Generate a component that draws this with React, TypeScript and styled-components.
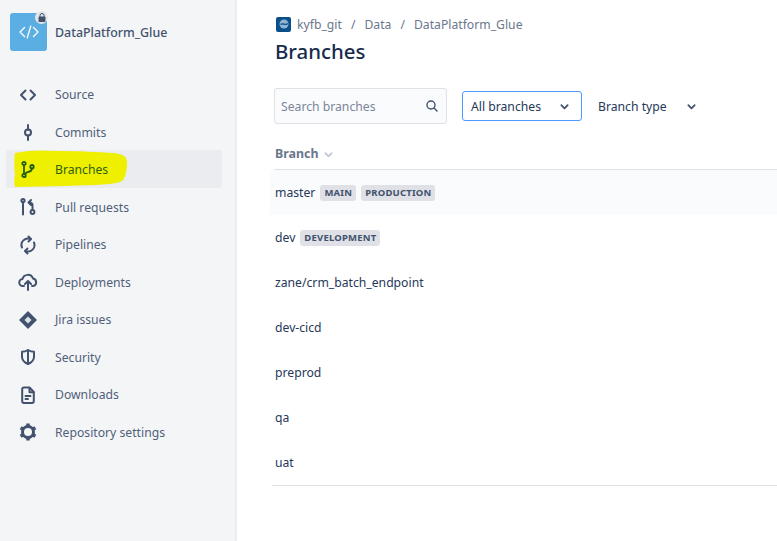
import React from "react";
import styled, { createGlobalStyle } from "styled-components";

const Global = createGlobalStyle`
  html, body { margin: 0; padding: 0; background: #fff; }
  body { font-family: "Noto Sans", "Open Sans", sans-serif; overflow: hidden; }
  #root { width: 777px; height: 541px; overflow: hidden; }
`;

const Page = styled.div`
  display: flex;
  width: 777px;
  height: 541px;
  overflow: hidden;
`;
const Sidebar = styled.aside`
  flex: 0 0 236px;
  height: 541px;
  box-sizing: border-box;
  background: #f4f5f7;
  border-right: 1px solid #e6e8ec;
  box-shadow: 1px 0 1px #f1f2f4;
  padding: 13px 13px 0 6px;
`;
const RepoHead = styled.div`
  display: flex;
  align-items: center;
  gap: 8px;
  padding-left: 4px;
  height: 38px;
  margin-bottom: 24px;
`;
const RepoAvatar = styled.div`
  position: relative;
  width: 37px;
  height: 38px;
  border-radius: 3px;
  background: #5aaee2;
  display: flex;
  align-items: center;
  justify-content: center;
`;
const LockBadge = styled.div`
  position: absolute;
  top: -2px;
  right: -1px;
  width: 13px;
  height: 13px;
  border-radius: 50%;
  background: #e4e6ea;
  display: flex;
  align-items: center;
  justify-content: center;
`;
const RepoName = styled.div`
  font-size: 12.4px;
  font-weight: 500;
  color: #42526e;
  white-space: nowrap;
`;
const Nav = styled.nav`
  display: flex;
  flex-direction: column;
`;
const NavRow = styled.div<{ $active?: boolean }>`
  position: relative;
  box-sizing: border-box;
  height: 37.5px;
  display: flex;
  align-items: center;
  padding: 2px 0 0 12px;
  gap: 17px;
  border-radius: 3px;
  background: ${(p) => (p.$active ? "#ebecf0" : "transparent")};
  color: ${(p) => (p.$active ? "#2f5f10" : "#505f79")};
  font-size: 12.2px;
`;
const NavIcon = styled.span`
  position: relative;
  z-index: 1;
  flex: 0 0 20px;
  height: 20px;
  display: flex;
  align-items: center;
  justify-content: center;
`;
const NavLabel = styled.span`
  position: relative;
  z-index: 1;
  white-space: nowrap;
`;
const Scribble = styled.svg`
  position: absolute;
  left: 8px;
  top: 0;
  width: 114px;
  height: 38px;
`;
const Main = styled.main`
  flex: 1;
  min-width: 0;
  padding: 15px 0 0 36px;
`;
const Crumbs = styled.div`
  display: flex;
  align-items: center;
  height: 18px;
  padding-left: 4px;
  font-size: 12.2px;
  color: #6b778c;
  white-space: nowrap;
`;
const CrumbLogo = styled.span`
  width: 15px;
  height: 15px;
  border-radius: 2px;
  background: #0b4f8a;
  margin-right: 6px;
  display: flex;
  align-items: center;
  justify-content: center;
`;
const CrumbSep = styled.span`
  margin: 0 9px;
`;
const Title = styled.h1`
  margin: 3px 0 0 3px;
  font-size: 20.4px;
  line-height: 30px;
  font-weight: 500;
  color: #172b4d;
`;
const Filters = styled.div`
  display: flex;
  align-items: center;
  margin: 22px 0 0 2px;
`;
const Search = styled.div`
  box-sizing: border-box;
  width: 173px;
  height: 36px;
  border: 1px solid #dfe1e6;
  border-radius: 3px;
  background: #fafbfc;
  display: flex;
  align-items: center;
  justify-content: space-between;
  padding: 0 7px 0 6px;
  font-size: 12.2px;
  color: #7a869a;
`;
const Select = styled.div<{ $focused?: boolean }>`
  box-sizing: border-box;
  height: 30px;
  display: flex;
  align-items: center;
  justify-content: space-between;
  font-size: 12.2px;
  color: #253858;
  white-space: nowrap;
  border-radius: 3px;
  width: ${(p) => (p.$focused ? "120px" : "100px")};
  margin-left: ${(p) => (p.$focused ? "15px" : "16px")};
  padding: ${(p) => (p.$focused ? "0 12px 0 8px" : "0 2px 0 0")};
  border: ${(p) => (p.$focused ? "1px solid #4c9aff" : "none")};
`;
const TableHead = styled.div`
  display: flex;
  align-items: flex-start;
  gap: 6px;
  height: 46px;
  margin-left: 2px;
  padding: 21px 0 0 1px;
  box-sizing: border-box;
  font-size: 12.4px;
  line-height: 17px;
  font-weight: 700;
  color: #6b778c;
  border-bottom: 1px solid #dfe1e6;
`;
const HeadChevron = styled.span`
  display: flex;
  margin-top: 5px;
`;
const Rows = styled.div`
  border-bottom: 1px solid #dfe1e6;
`;
const Row = styled.div<{ $hover?: boolean }>`
  height: 45px;
  display: flex;
  align-items: center;
  gap: 5px;
  margin-left: -2px;
  padding-left: 5px;
  font-size: 12.2px;
  color: #253858;
  white-space: nowrap;
  background: ${(p) => (p.$hover ? "#fafbfc" : "transparent")};
`;
const Lozenge = styled.span`
  font-size: 9.5px;
  font-weight: 700;
  line-height: 16px;
  height: 16px;
  margin-top: 1px;
  padding: 0 4px;
  border-radius: 3px;
  background: #dfe1e6;
  color: #42526e;
  letter-spacing: 0.2px;
`;

const C = "#42526e";
const S = { fill: "none", stroke: C, strokeWidth: 2, strokeLinecap: "round" as const, strokeLinejoin: "round" as const };

const icons: Record<string, React.ReactNode> = {
  source: <svg width="18" height="18" viewBox="0 0 18 18" {...S}><path d="M6.5 4.5 2 9l4.5 4.5M11.500 4.500 16 9l-4.500 4.500" /></svg>,
  commits: <svg width="18" height="20" viewBox="0 0 18 20" {...S}><circle cx="9" cy="10.500" r="3" /><path d="M9 3v4.500M9 13.500V18" /></svg>,
  branches: <svg width="18" height="20" viewBox="0 0 18 20" fill="none" stroke="#1f5c14" strokeWidth="1.800"><circle cx="5" cy="3.500" r="1.700" /><circle cx="5" cy="15.500" r="1.700" /><circle cx="13" cy="6.700" r="1.700" /><path d="M5 5.500v8M13 8.500c0 4.500-6 2.500-6.500 5.500" /></svg>,
  pull: <svg width="20" height="20" viewBox="0 0 20 20" {...S}><circle cx="5" cy="3.500" r="1.600" /><path d="M5 5.500V17.500" /><circle cx="14.500" cy="15" r="1.900" /><path d="M14.500 13V8c0-2-1-2.500-3.500-2.500M13 3l-2.500 2.500L13 8" /></svg>,
  pipelines: <svg width="20" height="20" viewBox="0 0 20 20" {...S}><path d="M4 12.500A6.500 6.500 0 0 1 12.500 4M16 7.500A6.500 6.500 0 0 1 7.500 16" /><path d="M10.500 1.500 13 4l-2.500 2.500M9.500 13.500 7 16l2.500 2.500" /></svg>,
  deployments: <svg width="20" height="20" viewBox="0 0 20 20" {...S}><path d="M6 14H5a3.500 3.500 0 0 1-.5-7A5.500 5.500 0 0 1 15 6.500a3.800 3.800 0 0 1 0 7.500h-1" /><path d="M10 18V9.500M7 12l3-3 3 3" /></svg>,
  jira: <svg width="20" height="20" viewBox="0 0 20 20"><path fill={C} d="M10 1 19 10l-9 9-9-9z" /><path fill="#dfe3ea" d="M10 6.500 13.500 10 10 13.500 6.500 10z" /></svg>,
  security: <svg width="20" height="20" viewBox="0 0 20 20" {...S}><path d="M10 3c2 1.200 4 1.700 6 1.700v5c0 3.500-2.500 5.800-6 7.300-3.500-1.500-6-3.800-6-7.300v-5C6 4.700 8 4.200 10 3z" /><path d="M10 3.500v13.500" /></svg>,
  downloads: <svg width="20" height="20" viewBox="0 0 20 20" {...S}><path d="M11.500 2.500H6A1.800 1.800 0 0 0 4.200 4.300v12A1.800 1.800 0 0 0 6 18h8a1.800 1.800 0 0 0 1.800-1.700V7z" /><path d="M11.500 3v4.200h4M7.500 11h5M7.500 14h2.500" /></svg>,
  settings: <svg width="20" height="20" viewBox="0 0 20 20"><circle cx="10" cy="10" r="5.500" fill="none" stroke={C} strokeWidth="3" /><g stroke={C} strokeWidth="3.500"><path d="M10 1.500v3M10 15.500v3M2.600 5.700l2.600 1.500M14.800 12.800l2.600 1.500M2.600 14.300l2.600-1.500M14.800 7.200l2.600-1.500" /></g></svg>,
};

const navItems = [
  ["source", "Source"],
  ["commits", "Commits"],
  ["branches", "Branches"],
  ["pull", "Pull requests"],
  ["pipelines", "Pipelines"],
  ["deployments", "Deployments"],
  ["jira", "Jira issues"],
  ["security", "Security"],
  ["downloads", "Downloads"],
  ["settings", "Repository settings"],
];

const Chevron = ({ color = "#42526e", size = 9 }: { color?: string; size?: number }) => (
  <svg width={size} height={size} viewBox="0 0 10 10" fill="none" stroke={color} strokeWidth="2" strokeLinecap="round" strokeLinejoin="round">
    <path d="M1.500 3.500 5 7l3.500-3.500" />
  </svg>
);

export default function App() {
  return (
    <Page>
      <Global />
      <Sidebar>
        <RepoHead>
          <RepoAvatar>
            <svg width="20" height="14" viewBox="0 0 20 14" fill="none" stroke="#fff" strokeWidth="1.300" strokeLinecap="round" strokeLinejoin="round">
              <path d="M5.500 2.500 1 7l4.500 4.500M14.500 2.500 19 7l-4.500 4.500M11.800 1 8.200 13" />
            </svg>
            <LockBadge>
              <svg width="8" height="9" viewBox="0 0 8 9">
                <rect x="0.500" y="3.500" width="7" height="5.500" rx="1" fill="#42526e" />
                <path d="M2 4V2.500a2 2 0 0 1 4 0V4" fill="none" stroke="#42526e" strokeWidth="1" />
              </svg>
            </LockBadge>
          </RepoAvatar>
          <RepoName>DataPlatform_Glue</RepoName>
        </RepoHead>
        <Nav>
          {navItems.map(([k, label]) => (
            <NavRow key={k} $active={k === "branches"}>
              {k === "branches" && (
                <Scribble viewBox="0 0 114 38">
                  <path fill="#eef000" d="M1 3C14 0 30 0 44 1c20 0 40 1 56 2 8 1 13 3 13 9 0 8-1 14-4 18-3 3-8 3-14 4-24 2-60 2-94 3-1-4-1-8 0-12C0 18 0 10 1 3z" />
                </Scribble>
              )}
              <NavIcon>{icons[k]}</NavIcon>
              <NavLabel>{label}</NavLabel>
            </NavRow>
          ))}
        </Nav>
      </Sidebar>
      <Main>
        <Crumbs>
          <CrumbLogo>
            <svg width="12" height="12" viewBox="0 0 12 12"><circle cx="6" cy="6" r="4.500" fill="#8fb4d6" /><path d="M2.500 6.500C5 4.500 7.500 8 9.800 5.500" fill="none" stroke="#0b4f8a" strokeWidth="1.300" /></svg>
          </CrumbLogo>
          kyfb_git
          <CrumbSep>/</CrumbSep>
          Data
          <CrumbSep>/</CrumbSep>
          DataPlatform_Glue
        </Crumbs>
        <Title>Branches</Title>
        <Filters>
          <Search>
            Search branches
            <svg width="14" height="14" viewBox="0 0 14 14" fill="none" stroke="#42526e" strokeWidth="1.400" strokeLinecap="round"><circle cx="6" cy="6" r="4" /><path d="M9 9l3 3" /></svg>
          </Search>
          <Select $focused>All branches<Chevron /></Select>
          <Select>Branch type<Chevron /></Select>
        </Filters>
        <TableHead>Branch <HeadChevron><Chevron color="#c1c7d0" /></HeadChevron></TableHead>
        <Rows>
          <Row $hover>master<Lozenge>MAIN</Lozenge><Lozenge>PRODUCTION</Lozenge></Row>
          <Row>dev<Lozenge>DEVELOPMENT</Lozenge></Row>
          <Row>zane/crm_batch_endpoint</Row>
          <Row>dev-cicd</Row>
          <Row>preprod</Row>
          <Row>qa</Row>
          <Row>uat</Row>
        </Rows>
      </Main>
    </Page>
  );
}
